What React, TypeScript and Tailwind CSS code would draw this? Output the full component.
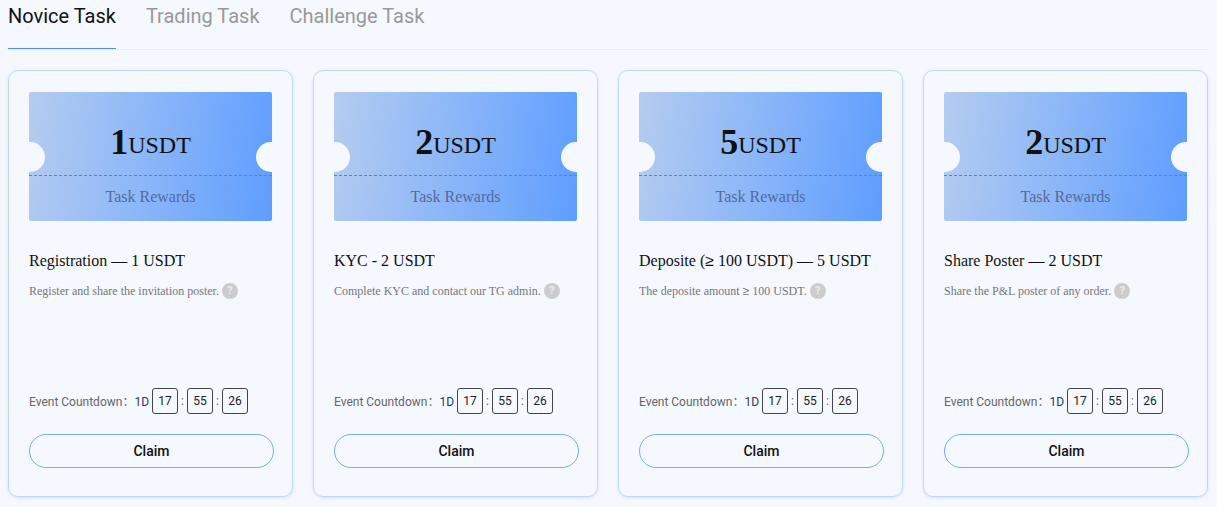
import React from 'react';

interface Task {
  amount: number;
  title: string;
  desc: string;
}

const tasks: Task[] = [
  { amount: 1, title: 'Registration — 1 USDT', desc: 'Register and share the invitation poster.' },
  { amount: 2, title: 'KYC - 2 USDT', desc: 'Complete KYC and contact our TG admin.' },
  { amount: 5, title: 'Deposite (≥ 100 USDT) — 5 USDT', desc: 'The deposite amount ≥ 100 USDT.' },
  { amount: 2, title: 'Share Poster — 2 USDT', desc: 'Share the P&L poster of any order.' },
];

const serif = "font-['Liberation_Serif',serif]";

// the ≥ in the picture has a flat under-bar, which Liberation Serif's glyph lacks
const withGte = (text: string) =>
  text.split('≥').map((part, i) => (
    <React.Fragment key={i}>
      {i > 0 && <span className="font-['Liberation_Sans',sans-serif]">≥</span>}
      {part}
    </React.Fragment>
  ));

const TimeBox = ({ value }: { value: string }) => (
  <span className="flex h-[26px] w-[26px] items-center justify-center rounded-[3px] border border-[#444] text-[12px] text-[#222]">
    {value}
  </span>
);

const TaskCard = ({ amount, title, desc }: Task) => (
  <div className="flex h-[427px] flex-col rounded-[10px] border border-[#bcd6fd] px-5 pt-[21px] shadow-[0_1px_3px_rgba(110,160,250,0.25)]">
    {/* Ticket */}
    <div className="relative h-[129px] w-[243px] overflow-hidden rounded-[2px] bg-linear-97 from-[#b4ccf0] to-[#5e9dff]">
      <div className={`${serif} flex h-[83px] items-end justify-center pb-[9px] text-[#111]`}>
        <span className="text-[36px] leading-[48px] font-bold">{amount}</span>
        <span className="text-[24px] leading-[42px]">USDT</span>
      </div>
      <div className="border-t border-dashed border-[#5b82c4]" />
      <div className={`${serif} mt-[11px] text-center text-[16px] leading-5 text-[#546a9e]`}>Task Rewards</div>
      <span className="absolute top-[50px] -left-[15px] h-[30px] w-[31px] rounded-full bg-[#f5f8ff]" />
      <span className="absolute top-[50px] -right-[15px] h-[30px] w-[31px] rounded-full bg-[#f5f8ff]" />
    </div>

    <div className={`${serif} mt-[30px] text-[16px] leading-5 text-[#111]`}>{withGte(title)}</div>
    <div className={`${serif} mt-[10px] flex items-center gap-[3px] text-[12px] leading-5 text-[#777]`}>
      <span>{withGte(desc)}</span>
      <span className="flex h-4 w-4 items-center justify-center rounded-full bg-[#ccc] font-['Roboto',sans-serif] text-[11px] font-bold text-[#eee]">
        ?
      </span>
    </div>

    {/* Countdown */}
    <div className="mt-auto flex items-center font-['Roboto','Noto_Sans_CJK_SC',sans-serif] text-[12px] text-[#666]">
      <span className="pt-[1px]">Event Countdown：</span>
      <span className="mr-[3px] pt-[1px] text-[#1f3a6e]">1D</span>
      <TimeBox value="17" />
      <span className="w-[9px] text-center">:</span>
      <TimeBox value="55" />
      <span className="w-[9px] text-center">:</span>
      <TimeBox value="26" />
    </div>

    <button className="mt-[20px] mb-[28px] h-[34px] w-[245px] shrink-0 rounded-full border border-[#78aaf8] font-['Roboto',sans-serif] text-[14px] font-medium text-[#111]">
      Claim
    </button>
  </div>
);

export default function App() {
  return (
    <div className="h-[507px] w-[1217px] overflow-hidden bg-[#f5f8ff] pr-[9px] pl-2 font-['Roboto',sans-serif]">
      <div className="flex h-[50px] gap-[30px] border-b border-[#e9edf3] text-[20px] text-[#999]">
        <div className="h-[49px] border-b border-[#4c90fb] pt-[2px] leading-7 text-[#111]">Novice Task</div>
        <div className="pt-[2px] leading-7">Trading Task</div>
        <div className="pt-[2px] leading-7">Challenge Task</div>
      </div>
      <div className="mt-5 grid grid-cols-4 gap-5">
        {tasks.map((task, i) => (
          <TaskCard key={i} {...task} />
        ))}
      </div>
    </div>
  );
}
